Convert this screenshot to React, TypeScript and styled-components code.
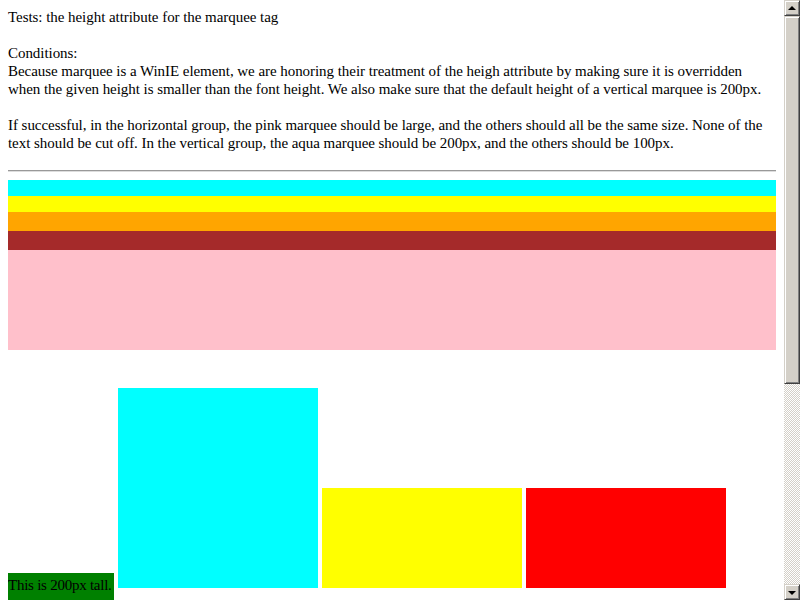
import React from "react";
import styled, { createGlobalStyle } from "styled-components";

const Global = createGlobalStyle`
  html, body {
    margin: 0;
    padding: 0;
    width: 800px;
    height: 600px;
    overflow: hidden;
    background: #fff;
  }
`;

const Page = styled.div`
  display: flex;
  width: 800px;
  height: 600px;
  overflow: hidden;
`;

const Content = styled.div`
  flex: 1;
  padding: 8px 8px 0 8px;
  font-family: "Liberation Serif", "Times New Roman", serif;
  font-size: 15px;
  line-height: 18px;
  color: #000;
  overflow: hidden;
`;

const Para = styled.p`
  margin: 0 0 18px 0;
  letter-spacing: -0.05px;
`;

const Rule = styled.hr`
  margin: 1px 0 8px 0;
  border: none;
  border-top: 1px solid #999;
  border-bottom: 1px solid #ddd;
  height: 0;
`;

const Bar = styled.div<{ $color: string; $h: number }>`
  background: ${(p) => p.$color};
  height: ${(p) => p.$h}px;
`;

const VRow = styled.div`
  display: flex;
  align-items: flex-end;
  gap: 4px;
  margin-top: 38px;
`;

const Box = styled.div<{ $color: string; $h: number }>`
  background: ${(p) => p.$color};
  width: 200px;
  height: ${(p) => p.$h}px;
  flex: none;
`;

const Label = styled.div`
  background: #008000;
  width: 106px;
  height: 27px;
  margin-bottom: -12px;
  line-height: 25px;
  font-size: 15px;
  letter-spacing: -0.25px;
  white-space: nowrap;
  overflow: hidden;
  flex: none;
`;

const Scroll = styled.div`
  width: 16px;
  height: 600px;
  display: flex;
  flex-direction: column;
  flex: none;
`;

const Btn = styled.div`
  box-sizing: border-box;
  width: 16px;
  height: 16px;
  background: #d4d0c8;
  border-top: 1px solid #d4d0c8;
  border-left: 1px solid #d4d0c8;
  border-right: 1px solid #404040;
  border-bottom: 1px solid #404040;
  box-shadow: inset 1px 1px 0 #fff, inset -1px -1px 0 #808080;
  display: flex;
  align-items: center;
  justify-content: center;
`;

const Arrow = styled.div<{ $up?: boolean }>`
  width: 0;
  height: 0;
  border-left: 4px solid transparent;
  border-right: 4px solid transparent;
  ${(p) =>
    p.$up
      ? "border-bottom: 4px solid #000; margin-top: -1px;"
      : "border-top: 4px solid #000; margin-top: 1px;"}
`;

const Thumb = styled(Btn)`
  height: 368px;
`;

const Track = styled.div`
  flex: 1;
  background-color: #fff;
  background-image: repeating-conic-gradient(#d4d0c8 0 25%, #fff 0 50%);
  background-size: 2px 2px;
`;

export default function App() {
  return (
    <>
      <Global />
      <Page>
        <Content>
          <Para>Tests: the height attribute for the marquee tag</Para>
          <Para>
            Conditions:
            <br />
            Because marquee is a WinIE element, we are honoring their treatment of the heigh
            attribute by making sure it is overridden when the given height is smaller than the
            font height. We also make sure that the default height of a vertical marquee is 200px.
          </Para>
          <Para>
            If successful, in the horizontal group, the pink marquee should be large, and the
            others should all be the same size. None of the text should be cut off. In the
            vertical group, the aqua marquee should be 200px, and the others should be 100px.
          </Para>
          <Rule />
          <Bar $color="#00ffff" $h={16} />
          <Bar $color="#ffff00" $h={16} />
          <Bar $color="#ffa500" $h={19} />
          <Bar $color="#a52a2a" $h={19} />
          <Bar $color="#ffc0cb" $h={100} />
          <VRow>
            <Label>This is 200px tall.</Label>
            <Box $color="#00ffff" $h={200} />
            <Box $color="#ffff00" $h={100} />
            <Box $color="#ff0000" $h={100} />
          </VRow>
        </Content>
        <Scroll>
          <Btn>
            <Arrow $up />
          </Btn>
          <Thumb />
          <Track />
          <Btn>
            <Arrow />
          </Btn>
        </Scroll>
      </Page>
    </>
  );
}
